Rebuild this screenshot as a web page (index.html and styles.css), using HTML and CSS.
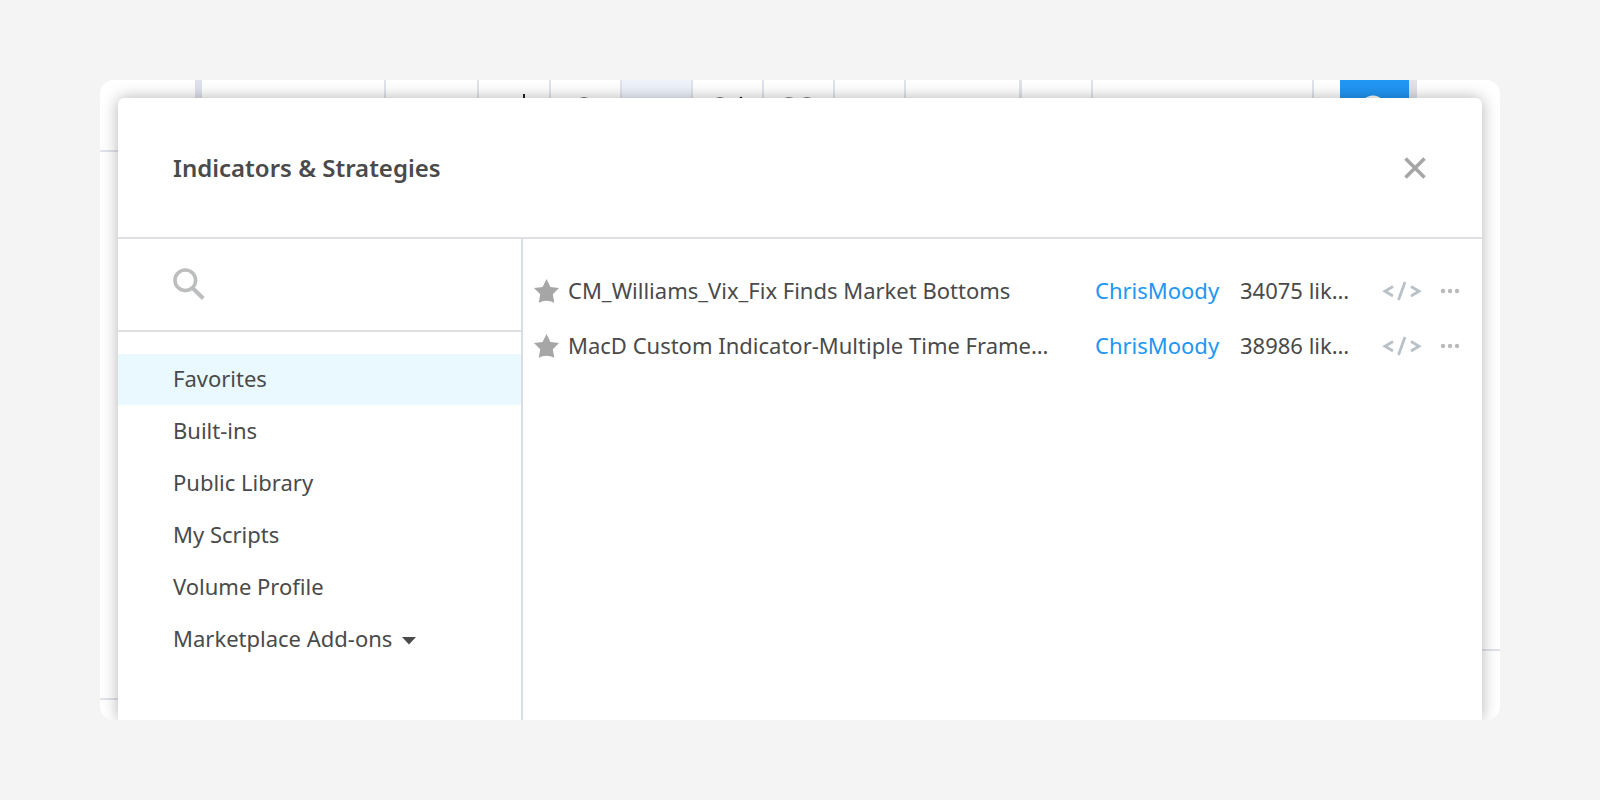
FILE: index.html
```html
<!DOCTYPE html>
<html lang="en">
<head>
<meta charset="utf-8">
<title>Indicators &amp; Strategies</title>
<link rel="stylesheet" href="styles.css">
</head>
<body>
<svg class="defs" aria-hidden="true">
  <symbol id="star" viewBox="0 0 25 24"><path d="M12.5 0l3.900 7.900 8.600 1.200-6.200 6.100 1.500 8.600Q12.500 19.500 4.700 23.800L6.200 15.200 0 9.100l8.600-1.200z"/></symbol>
  <symbol id="code" viewBox="0 0 40 20"><path d="M11 5.500L3 10.200L11 15M23 1L16.500 19M29 5.500L37 10.200L29 15" fill="none" stroke="currentColor" stroke-width="2.800"/></symbol>
  <symbol id="dots" viewBox="0 0 20 6"><circle cx="3" cy="3" r="2.200"/><circle cx="10" cy="3" r="2.200"/><circle cx="17" cy="3" r="2.200"/></symbol>
</svg>
<main class="stage">
  <div class="backdrop" aria-hidden="true">
    <div class="pane pane-left"></div>
    <div class="divider divider-left"></div>
    <div class="toolbar">
      <span class="cell cell-symbol"></span>
      <span class="cell cell-wide"></span>
      <span class="cell cell-style"><svg viewBox="0 0 70 70"><path d="M45 14v40" stroke="#222" stroke-width="2"/></svg></span>
      <span class="cell"><svg viewBox="0 0 70 70"><circle cx="33" cy="27" r="9" fill="none" stroke="#777" stroke-width="2"/></svg></span>
      <span class="cell cell-on"></span>
      <span class="cell"><svg viewBox="0 0 70 70"><circle cx="27" cy="27" r="9" fill="none" stroke="#777" stroke-width="2"/><circle cx="48" cy="18" r="1.300" fill="#222"/></svg></span>
      <span class="cell"><svg viewBox="0 0 70 70"><circle cx="25" cy="27" r="9" fill="none" stroke="#777" stroke-width="2"/><circle cx="43" cy="27" r="9" fill="none" stroke="#777" stroke-width="2"/></svg></span>
      <span class="cell"></span>
      <span class="cell cell-large"></span>
      <span class="cell"></span>
      <span class="cell cell-fill"></span>
      <span class="cell cell-gap"></span>
      <span class="cell-publish"><svg viewBox="0 0 70 70"><circle cx="33" cy="28" r="11" fill="none" stroke="#fff" stroke-width="3"/></svg></span>
    </div>
    <div class="divider"></div>
    <div class="pane pane-right"></div>
  </div>

  <section class="dialog" role="dialog" aria-labelledby="dialog-title">
    <header class="dialog-head">
      <h1 id="dialog-title">Indicators &amp; Strategies</h1>
      <button class="icon-button close" type="button" aria-label="Close">
        <svg width="22" height="22" viewBox="0 0 22 22"><path d="M1.500 1.500l19 19M20.500 1.500l-19 19" stroke="currentColor" stroke-width="3.600"/></svg>
      </button>
    </header>
    <div class="dialog-body">
      <aside class="sidebar">
        <label class="search">
          <svg width="32" height="32" viewBox="0 0 32 32" aria-hidden="true"><circle cx="12.300" cy="12.300" r="10.300" fill="none" stroke="currentColor" stroke-width="3.600"/><path d="M20 20.500l10.300 10" stroke="currentColor" stroke-width="4"/></svg>
          <input type="text" aria-label="Search">
        </label>
        <nav class="menu">
          <a class="active" href="#favorites">Favorites</a>
          <a href="#built-ins">Built-ins</a>
          <a href="#library">Public Library</a>
          <a href="#scripts">My Scripts</a>
          <a href="#volume">Volume Profile</a>
          <a href="#addons">Marketplace Add-ons <svg class="caret" width="14" height="8" viewBox="0 0 14 8" aria-hidden="true"><path d="M0 0h14L7 7.500z"/></svg></a>
        </nav>
      </aside>
      <ul class="results">
        <li>
          <button class="icon-button" type="button" aria-label="Remove from favorites"><svg width="25" height="24"><use href="#star"/></svg></button>
          <span class="name">CM_Williams_Vix_Fix Finds Market Bottoms</span>
          <a class="author" href="#author">ChrisMoody</a>
          <span class="likes">34075 lik…</span>
          <button class="icon-button source" type="button" aria-label="Source code"><svg width="40" height="20"><use href="#code"/></svg></button>
          <button class="icon-button more" type="button" aria-label="More"><svg width="20" height="6"><use href="#dots"/></svg></button>
        </li>
        <li>
          <button class="icon-button" type="button" aria-label="Remove from favorites"><svg width="25" height="24"><use href="#star"/></svg></button>
          <span class="name">MacD Custom Indicator-Multiple Time Frame…</span>
          <a class="author" href="#author">ChrisMoody</a>
          <span class="likes">38986 lik…</span>
          <button class="icon-button source" type="button" aria-label="Source code"><svg width="40" height="20"><use href="#code"/></svg></button>
          <button class="icon-button more" type="button" aria-label="More"><svg width="20" height="6"><use href="#dots"/></svg></button>
        </li>
      </ul>
    </div>
  </section>
</main>
</body>
</html>
```
FILE: styles.css
```css
* { box-sizing: border-box; }

body {
  margin: 0;
  min-height: 100vh;
  padding: 80px 100px;
  display: flex;
  background: #f4f4f4;
  color: #4a4a4a;
  font: 22px/30px "Trebuchet MS", "Noto Sans", sans-serif;
}

.defs { position: absolute; width: 0; height: 0; }

.stage {
  position: relative;
  flex: 1;
  display: flex;
  padding: 18px 18px 0;
  border-radius: 14px;
  overflow: hidden;
  background: #fff;
}

/* Chart window behind the dialog */
.backdrop {
  position: absolute;
  inset: 0;
  display: flex;
}
.divider { width: 8px; background: #dfe2ec; }
.divider-left { width: 7px; }
.pane-left {
  width: 95px;
  margin: 70px 0 20px;
  border-top: 2px solid #e0e3eb;
  border-bottom: 2px solid #e0e3eb;
}
.pane-right {
  width: 83px;
  margin-bottom: 69px;
  border-bottom: 2px solid #e0e3eb;
}
.toolbar { flex: 1; display: flex; height: 70px; }
.cell {
  width: 71px;
  border-right: 2px solid #e0e3eb;
}
.cell svg, .cell-publish svg { display: block; width: 70px; height: 70px; }
.cell-symbol { width: 184px; }
.cell-wide { width: 93px; }
.cell-style { width: 72px; }
.cell-on { background: #eef2fb; }
.cell-large { width: 116px; border-right-width: 3px; }
.cell-fill { flex: 1; }
.cell-gap { width: 26px; border: 0; }
.cell-publish { width: 69px; background: #2196f3; }

.dialog {
  position: relative;
  flex: 1;
  display: flex;
  flex-direction: column;
  border-radius: 6px 6px 0 0;
  background: #fff;
  box-shadow: 0 0 16px rgba(0, 0, 0, 0.3);
}
.dialog-head {
  display: flex;
  align-items: center;
  justify-content: space-between;
  height: 141px;
  padding: 0 56px 0 55px;
  border-bottom: 2px solid #dfe0e3;
}
h1 {
  margin: 0;
  font-size: 24px;
  line-height: 32px;
  font-weight: 600;
}
.icon-button {
  display: flex;
  padding: 0;
  border: 0;
  background: none;
  color: #a6a6a6;
  fill: currentColor;
  cursor: pointer;
}

.dialog-body { flex: 1; display: flex; }
.sidebar {
  width: 405px;
  border-right: 2px solid #dadde3;
}
.search {
  display: flex;
  align-items: center;
  gap: 12px;
  height: 93px;
  padding: 0 20px 2px 55px;
  border-bottom: 2px solid #dfe0e2;
  color: #bcbdbe;
}
.search input {
  flex: 1;
  min-width: 0;
  border: 0;
  outline: 0;
  background: none;
  color: #4a4a4a;
  font: inherit;
}
.menu {
  display: flex;
  flex-direction: column;
  gap: 1px;
  padding-top: 22px;
}
.menu a {
  display: flex;
  align-items: center;
  gap: 10px;
  height: 51px;
  padding: 0 0 3px 55px;
  color: inherit;
  text-decoration: none;
}
.menu .active { background: #e9f9ff; }
.caret { margin-top: 5px; fill: #4a4a4a; }

.results {
  flex: 1;
  min-width: 0;
  margin: 0;
  padding: 24px 22px 0 11px;
  list-style: none;
}
.results li {
  display: flex;
  align-items: center;
  height: 55px;
  white-space: nowrap;
}
.name, .author, .likes { padding-bottom: 2px; }
.name {
  flex: 1;
  min-width: 0;
  margin-left: 9px;
  overflow: hidden;
}
.author { width: 145px; color: #2196f3; text-decoration: none; }
.likes { width: 142px; }
.source { width: 58px; color: #b9c1c8; }
.more { color: #b8babc; }
```
